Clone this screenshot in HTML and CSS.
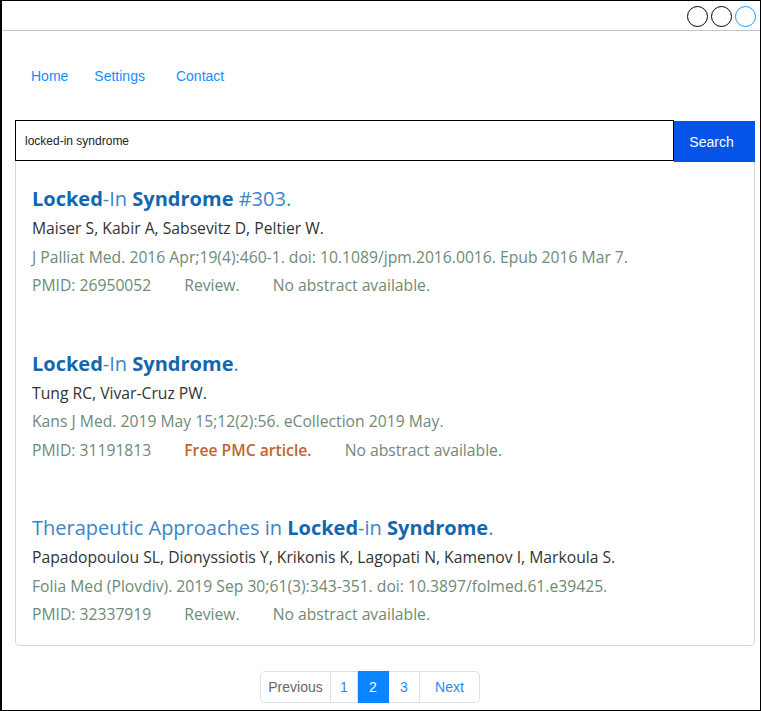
FILE: index.html
```html
<!DOCTYPE html>
<html>
<head>
<meta charset="utf-8">
<link rel="stylesheet" href="styles.css">
</head>
<body>
<div class="frame">
  <div class="topbar">
    <span class="dot"></span><span class="dot"></span><span class="dot blue"></span>
  </div>
  <nav class="nav">
    <a class="nav-link">Home</a>
    <a class="nav-link">Settings</a>
    <a class="nav-link contact">Contact</a>
  </nav>
  <div class="search">
    <div class="search-input">locked-in syndrome</div>
    <button class="search-btn">Search</button>
  </div>
  <div class="card">
    <div class="result">
      <div class="title"><b>Locked</b>-In <b>Syndrome</b> #303.</div>
      <div class="authors">Maiser S, Kabir A, Sabsevitz D, Peltier W.</div>
      <div class="journal">J Palliat Med. 2016 Apr;19(4):460-1. doi: 10.1089/jpm.2016.0016. Epub 2016 Mar 7.</div>
      <div class="meta"><span class="pmid">PMID: 26950052</span><span class="tag">Review.</span><span>No abstract available.</span></div>
    </div>
    <div class="result">
      <div class="title"><b>Locked</b>-In <b>Syndrome</b>.</div>
      <div class="authors">Tung RC, Vivar-Cruz PW.</div>
      <div class="journal">Kans J Med. 2019 May 15;12(2):56. eCollection 2019 May.</div>
      <div class="meta"><span class="pmid">PMID: 31191813</span><span class="tag free">Free PMC article.</span><span>No abstract available.</span></div>
    </div>
    <div class="result">
      <div class="title">Therapeutic Approaches in <b>Locked</b>-in <b>Syndrome</b>.</div>
      <div class="authors">Papadopoulou SL, Dionyssiotis Y, Krikonis K, Lagopati N, Kamenov I, Markoula S.</div>
      <div class="journal">Folia Med (Plovdiv). 2019 Sep 30;61(3):343-351. doi: 10.3897/folmed.61.e39425.</div>
      <div class="meta"><span class="pmid">PMID: 32337919</span><span class="tag">Review.</span><span>No abstract available.</span></div>
    </div>
  </div>
  <div class="pager">
    <span class="page prev">Previous</span>
    <span class="page p1">1</span>
    <span class="page active">2</span>
    <span class="page">3</span>
    <span class="page next">Next</span>
  </div>
</div>
</body>
</html>
```
FILE: styles.css
```css
html, body { margin: 0; padding: 0; background: #fff; }
body { font-family: "Liberation Sans", Arial, sans-serif; }
.frame {
  width: 761px; height: 711px; box-sizing: border-box;
  border: 1px solid #000; border-left-width: 2px;
  overflow: hidden;
}
.topbar {
  height: 29px; border-bottom: 1px solid #c4c4c4;
  display: flex; justify-content: flex-end; align-items: center;
  gap: 3px; padding-right: 4px; box-sizing: content-box;
}
.dot {
  width: 21px; height: 21px; border-radius: 50%;
  border: 1.5px solid #000; box-sizing: border-box; margin-top: 1px;
}
.dot.blue { border-color: #2196f3; }
.nav { display: flex; padding: 37px 0 0 29px; height: 52px; box-sizing: border-box; }
.nav-link { color: #1a8cff; font-size: 14px; margin-right: 26px; line-height: 16px; }
.nav-link.contact { margin-left: 5px; }
.search { display: flex; margin: 37px 0 0 13px; width: 740px; position: relative; z-index: 1; }
.search-input {
  flex: 1; height: 41px; box-sizing: border-box; border: 1px solid #000;
  font-size: 12px; color: #222; padding: 0 9px; display: flex; align-items: center;
}
.search-btn {
  width: 81px; height: 41px; margin-top: 1px; border: 0; background: #0653ea; color: #fff;
  font-family: "Liberation Sans", Arial, sans-serif; font-size: 14px; padding: 0 6px 0 0;
}
.card {
  margin: -2px 0 0 13px; width: 740px; box-sizing: border-box;
  border: 1px solid #d6d6db; border-top: 0; border-radius: 0 0 5px 5px;
  padding: 24px 16px 16px;
  font-family: "Open Sans", "Noto Sans", sans-serif;
}
.result { margin-bottom: 49px; }
.result:last-child { margin-bottom: 0; }
.title { font-size: 20px; color: #3a86c6; line-height: 30px; }
.title b { color: #1267ae; font-weight: 700; }
.authors { font-size: 15.7px; color: #333; line-height: 28.5px; }
.journal, .meta { font-size: 15.7px; color: #6e8a78; line-height: 28.5px; }
.meta { display: flex; }
.pmid { margin-right: 33px; }
.tag { margin-right: 33px; }
.tag.free { color: #c2652b; font-weight: 600; }
.pager { display: flex; margin-top: 25px; padding-left: 258px; }
.page {
  height: 32px; box-sizing: border-box; border: 1px solid #dde2e8; border-left: 0;
  display: flex; align-items: center; justify-content: center;
  font-size: 14px; color: #1a8cff; width: 31px;
}
.page.p1 { width: 27px; }
.page.prev { border-left: 1px solid #dde2e8; border-radius: 5px 0 0 5px; color: #666; width: 71px; }
.page.next { border-radius: 0 5px 5px 0; width: 60px; }
.page.active { background: #0a84ff; color: #fff; border-color: #0a84ff; }
```
